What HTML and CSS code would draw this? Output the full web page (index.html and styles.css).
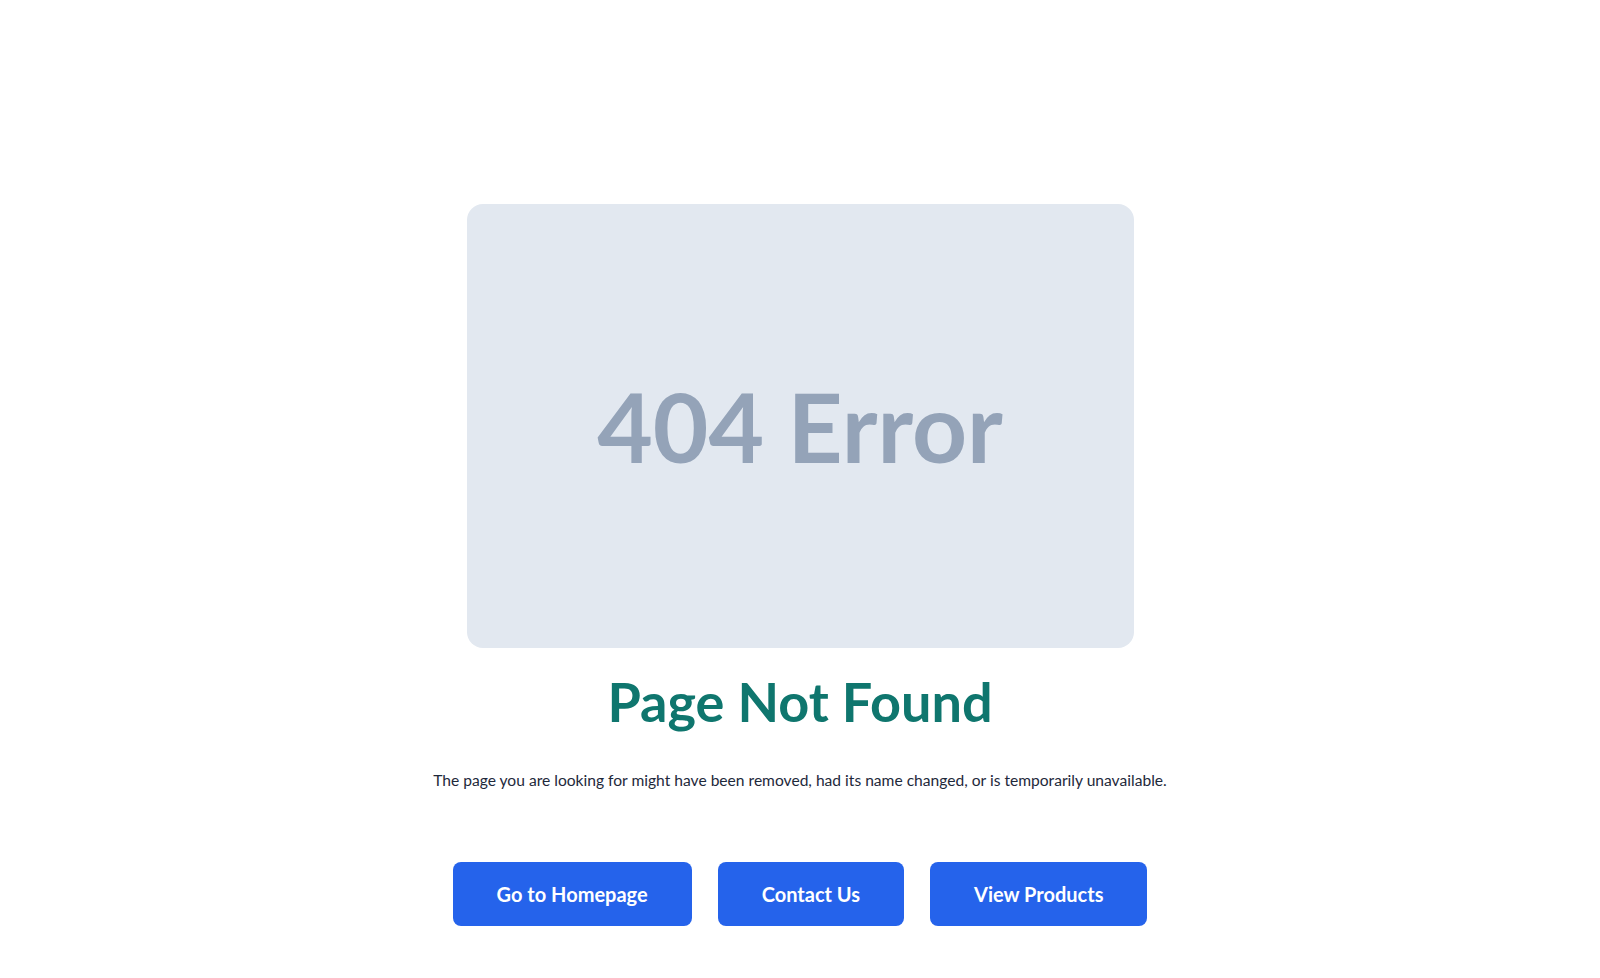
FILE: index.html
```html
<!DOCTYPE html>
<html lang="en">
<head>
<meta charset="utf-8">
<title>404 - Page Not Found</title>
<link rel="stylesheet" href="styles.css">
</head>
<body>
<main class="page">
  <div class="hero-img"><span class="hero-text">404 Error</span></div>
  <h1 class="title">Page Not Found</h1>
  <p class="lead">The page you are looking for might have been removed, had its name changed, or is temporarily unavailable.</p>
  <div class="actions">
    <a class="btn" href="#">Go to Homepage</a>
    <a class="btn" href="#">Contact Us</a>
    <a class="btn" href="#">View Products</a>
  </div>
</main>
</body>
</html>
```
FILE: styles.css
```css
* { box-sizing: border-box; }
html, body { margin: 0; padding: 0; background: #ffffff; }
body {
  font-family: "Lato", "Noto Sans", sans-serif;
  color: #1e293b;
}
.page {
  display: flex;
  flex-direction: column;
  align-items: center;
  padding-top: 204px;
}
.hero-img {
  width: 667px;
  height: 444px;
  background: #e2e8f0;
  border-radius: 16px;
  display: flex;
  align-items: center;
  justify-content: center;
}
.hero-text {
  font-family: "Lato", sans-serif;
  font-weight: 700;
  font-size: 96px;
  line-height: 1;
  color: #94a3b8;
}
.title {
  margin: 18px 0 0;
  font-size: 54px;
  line-height: 72px;
  font-weight: 700;
  color: #0f766e;
}
.lead {
  margin: 30px 0 0;
  font-size: 15.6px;
  line-height: 24px;
  color: #1e293b;
}
.actions {
  display: flex;
  gap: 26px;
  margin-top: 70px;
}
.btn {
  display: inline-flex;
  align-items: center;
  justify-content: center;
  height: 64px;
  padding: 0 44px;
  background: #2563eb;
  color: #ffffff;
  border-radius: 8px;
  font-size: 20px;
  font-weight: 700;
  text-decoration: none;
}
```
